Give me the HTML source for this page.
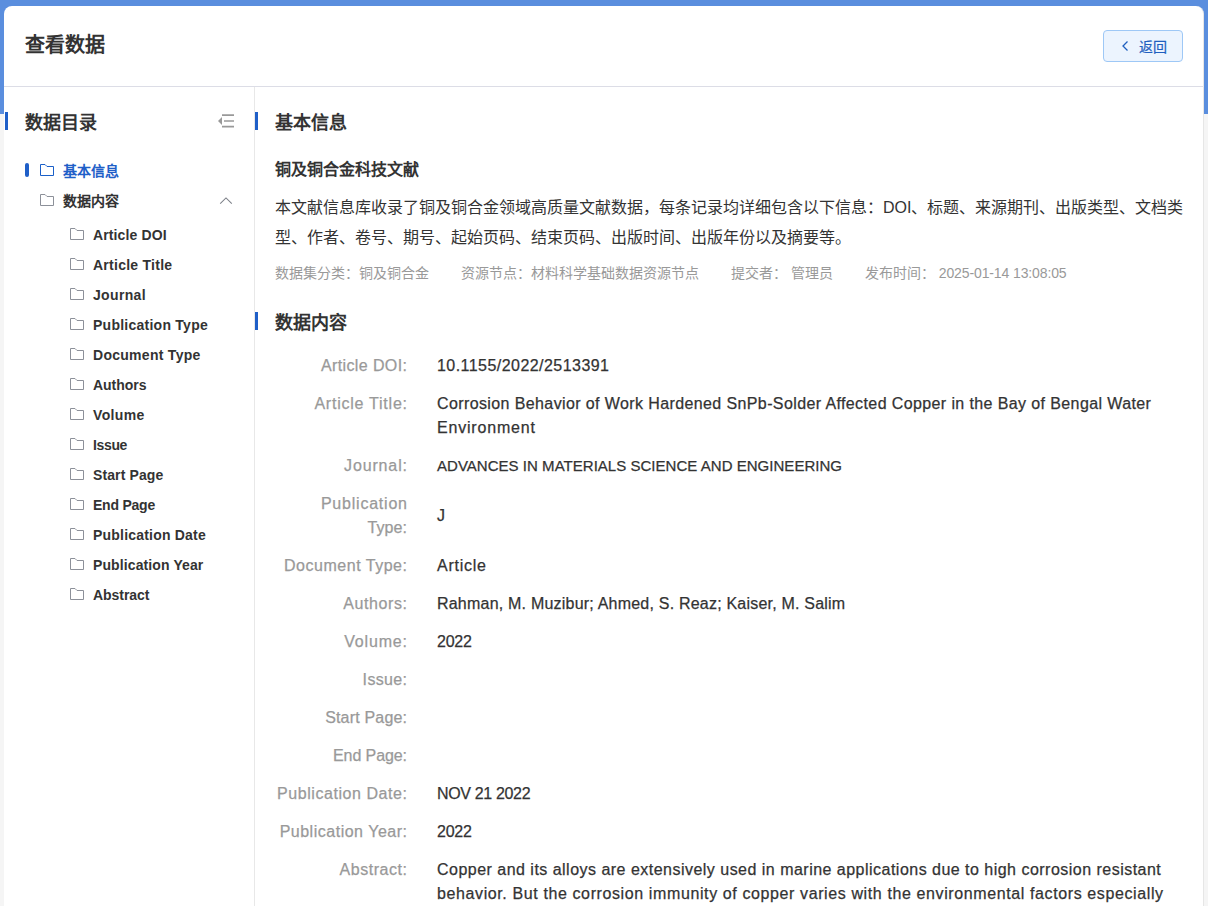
<!DOCTYPE html>
<html lang="zh-CN"><head><meta charset="utf-8">
<style>
*{box-sizing:border-box;margin:0;padding:0}
html,body{width:1208px;height:906px;overflow:hidden}
body{font-family:"Liberation Sans",sans-serif;background:#f5f5f5;position:relative;color:#333}
.bg{position:absolute;left:0;top:0;width:1208px;height:114px;background:#5a8ede}
.card{position:absolute;left:4px;top:6px;width:1200px;height:1000px;background:#fff;border-radius:8px;border-right:1px solid #e6e6e6}
.hline{position:absolute;left:4px;top:86px;width:1199px;height:1px;background:#dcdde6}
.vline{position:absolute;left:254px;top:87px;width:1px;height:820px;background:#e8e8e8}
h1{position:absolute;left:25px;top:33px;font-size:20px;font-weight:bold;color:#333;line-height:24px}
.back{position:absolute;left:1103px;top:30px;width:80px;height:32px;background:#ecf4fe;border:1px solid #9ec8f6;border-radius:4px;color:#1f5fbf;font-size:14px}
.back span{position:absolute;left:35px;top:7px;line-height:18px;-webkit-text-stroke:0.2px currentColor}
.back svg{position:absolute;left:18px;top:9px}
.bar{position:absolute;width:3px;background:#1f5fc8}
.h2{position:absolute;font-size:18px;font-weight:bold;line-height:24px;color:#333;white-space:nowrap}
.ic{position:absolute}
.pill{position:absolute;width:4px;height:14px;border-radius:2px;background:#1f5fc8}
.it{position:absolute;font-size:14px;font-weight:bold;line-height:20px;color:#333;white-space:nowrap}
.it.act{color:#1f5fc8}
.sub{position:absolute;left:275px;top:159px;font-size:16px;font-weight:bold;line-height:22px;white-space:nowrap}
.para{position:absolute;left:275px;top:193px;width:912px;font-size:16px;line-height:30px;color:#333}
.meta{position:absolute;left:275px;top:263px;font-size:14px;line-height:20px;color:#999;white-space:nowrap}
.meta span{margin-right:32px}
.rows{position:absolute;left:256px;top:347px;width:948px}
.row{position:relative;display:flex;font-size:16px;line-height:24px;padding:7px 0;-webkit-text-stroke:0.25px currentColor}
.row .l{width:151px;text-align:right;color:#999;flex:none}
.row .v{margin-left:30px;width:760px;color:#333;align-self:center;white-space:nowrap}
</style></head><body>
<div class="bg"></div>
<div class="card"></div>
<div class="hline"></div>
<div class="vline"></div>
<h1>查看数据</h1>
<div class="back"><svg width="8" height="12" viewBox="0 0 8 12"><path d="M5.5 1.5 L1 6 L5.5 10.5" fill="none" stroke="#1f5fbf" stroke-width="1.3"/></svg><span>返回</span></div>

<div class="bar" style="left:5px;top:112px;height:18px"></div>
<div class="h2" style="left:25px;top:111px">数据目录</div>
<svg class="ic" style="left:216px;top:112px" width="20" height="18" viewBox="0 0 20 18">
 <path d="M6 3.2H18M8 9H18M6 14.6H18" stroke="#999" stroke-width="1.7" fill="none"/>
 <path d="M6 5L2 9L6 13Z" fill="#999"/>
</svg>
<div class="pill" style="left:25px;top:163px"></div>
<svg class="ic" style="left:40px;top:164px" width="14" height="12" viewBox="0 0 14 12"><path d="M0.5 0.5H5L7 2.5H13.5V11.5H0.5Z" fill="none" stroke="#1a5fc8" stroke-width="1"/></svg>
<div class="it act" style="left:63px;top:161px">基本信息</div>
<svg class="ic" style="left:40px;top:194px" width="14" height="12" viewBox="0 0 14 12"><path d="M0.5 0.5H5L7 2.5H13.5V11.5H0.5Z" fill="none" stroke="#8c9099" stroke-width="1"/></svg>
<div class="it" style="left:63px;top:191px">数据内容</div>
<svg class="ic" style="left:219px;top:197px" width="14" height="8" viewBox="0 0 14 8"><path d="M1.2 6.6L7 0.9L12.8 6.6" fill="none" stroke="#7d8189" stroke-width="1.1"/></svg>
<svg class="ic" style="left:70px;top:228px" width="14" height="12" viewBox="0 0 14 12"><path d="M0.5 0.5H5L7 2.5H13.5V11.5H0.5Z" fill="none" stroke="#8c9099" stroke-width="1"/></svg>
<div class="it" style="left:93px;top:225px;letter-spacing:0.12px">Article DOI</div>
<svg class="ic" style="left:70px;top:258px" width="14" height="12" viewBox="0 0 14 12"><path d="M0.5 0.5H5L7 2.5H13.5V11.5H0.5Z" fill="none" stroke="#8c9099" stroke-width="1"/></svg>
<div class="it" style="left:93px;top:255px;letter-spacing:0.26px">Article Title</div>
<svg class="ic" style="left:70px;top:288px" width="14" height="12" viewBox="0 0 14 12"><path d="M0.5 0.5H5L7 2.5H13.5V11.5H0.5Z" fill="none" stroke="#8c9099" stroke-width="1"/></svg>
<div class="it" style="left:93px;top:285px;letter-spacing:0.33px">Journal</div>
<svg class="ic" style="left:70px;top:318px" width="14" height="12" viewBox="0 0 14 12"><path d="M0.5 0.5H5L7 2.5H13.5V11.5H0.5Z" fill="none" stroke="#8c9099" stroke-width="1"/></svg>
<div class="it" style="left:93px;top:315px;letter-spacing:0.25px">Publication Type</div>
<svg class="ic" style="left:70px;top:348px" width="14" height="12" viewBox="0 0 14 12"><path d="M0.5 0.5H5L7 2.5H13.5V11.5H0.5Z" fill="none" stroke="#8c9099" stroke-width="1"/></svg>
<div class="it" style="left:93px;top:345px;letter-spacing:0.28px">Document Type</div>
<svg class="ic" style="left:70px;top:378px" width="14" height="12" viewBox="0 0 14 12"><path d="M0.5 0.5H5L7 2.5H13.5V11.5H0.5Z" fill="none" stroke="#8c9099" stroke-width="1"/></svg>
<div class="it" style="left:93px;top:375px;letter-spacing:-0.03px">Authors</div>
<svg class="ic" style="left:70px;top:408px" width="14" height="12" viewBox="0 0 14 12"><path d="M0.5 0.5H5L7 2.5H13.5V11.5H0.5Z" fill="none" stroke="#8c9099" stroke-width="1"/></svg>
<div class="it" style="left:93px;top:405px;letter-spacing:0.36px">Volume</div>
<svg class="ic" style="left:70px;top:438px" width="14" height="12" viewBox="0 0 14 12"><path d="M0.5 0.5H5L7 2.5H13.5V11.5H0.5Z" fill="none" stroke="#8c9099" stroke-width="1"/></svg>
<div class="it" style="left:93px;top:435px;letter-spacing:-0.35px">Issue</div>
<svg class="ic" style="left:70px;top:468px" width="14" height="12" viewBox="0 0 14 12"><path d="M0.5 0.5H5L7 2.5H13.5V11.5H0.5Z" fill="none" stroke="#8c9099" stroke-width="1"/></svg>
<div class="it" style="left:93px;top:465px;letter-spacing:0.11px">Start Page</div>
<svg class="ic" style="left:70px;top:498px" width="14" height="12" viewBox="0 0 14 12"><path d="M0.5 0.5H5L7 2.5H13.5V11.5H0.5Z" fill="none" stroke="#8c9099" stroke-width="1"/></svg>
<div class="it" style="left:93px;top:495px;letter-spacing:-0.23px">End Page</div>
<svg class="ic" style="left:70px;top:528px" width="14" height="12" viewBox="0 0 14 12"><path d="M0.5 0.5H5L7 2.5H13.5V11.5H0.5Z" fill="none" stroke="#8c9099" stroke-width="1"/></svg>
<div class="it" style="left:93px;top:525px;letter-spacing:0.2px">Publication Date</div>
<svg class="ic" style="left:70px;top:558px" width="14" height="12" viewBox="0 0 14 12"><path d="M0.5 0.5H5L7 2.5H13.5V11.5H0.5Z" fill="none" stroke="#8c9099" stroke-width="1"/></svg>
<div class="it" style="left:93px;top:555px;letter-spacing:0.11px">Publication Year</div>
<svg class="ic" style="left:70px;top:588px" width="14" height="12" viewBox="0 0 14 12"><path d="M0.5 0.5H5L7 2.5H13.5V11.5H0.5Z" fill="none" stroke="#8c9099" stroke-width="1"/></svg>
<div class="it" style="left:93px;top:585px;letter-spacing:-0.04px">Abstract</div>

<div class="bar" style="left:255px;top:112px;height:18px"></div>
<div class="h2" style="left:275px;top:111px">基本信息</div>
<div class="sub">铜及铜合金科技文献</div>
<div class="para">本文献信息库收录了铜及铜合金领域高质量文献数据，每条记录均详细包含以下信息：DOI、标题、来源期刊、出版类型、文档类型、作者、卷号、期号、起始页码、结束页码、出版时间、出版年份以及摘要等。</div>
<div class="meta"><span>数据集分类：铜及铜合金</span><span>资源节点：材料科学基础数据资源节点</span><span>提交者： 管理员</span><span>发布时间： <i style="font-style:normal;letter-spacing:-0.12px">2025-01-14 13:08:05</i></span></div>
<div class="bar" style="left:255px;top:312px;height:18px"></div>
<div class="h2" style="left:275px;top:311px">数据内容</div>
<div class="rows">
<div class="row"><div class="l"><span style="letter-spacing:0.39px;margin-right:-0.39px">Article DOI:</span></div><div class="v"><span style="letter-spacing:0.45px;margin-right:-0.45px">10.1155/2022/2513391</span></div></div>
<div class="row"><div class="l"><span style="letter-spacing:0.76px;margin-right:-0.76px">Article Title:</span></div><div class="v"><span style="letter-spacing:0.39px;margin-right:-0.39px">Corrosion Behavior of Work Hardened SnPb-Solder Affected Copper in the Bay of Bengal Water</span><br><span style="letter-spacing:0.81px;margin-right:-0.81px">Environment</span></div></div>
<div class="row"><div class="l"><span style="letter-spacing:0.86px;margin-right:-0.86px">Journal:</span></div><div class="v"><span style="font-size:15px;letter-spacing:0.03px">ADVANCES IN MATERIALS SCIENCE AND ENGINEERING</span></div></div>
<div class="row"><div class="l"><span style="letter-spacing:0.78px;margin-right:-0.78px">Publication</span><br><span style="letter-spacing:0.1px;margin-right:-0.1px">Type:</span></div><div class="v"><span style="letter-spacing:-1.0px;margin-right:1.0px">J</span></div></div>
<div class="row"><div class="l"><span style="letter-spacing:0.52px;margin-right:-0.52px">Document Type:</span></div><div class="v"><span style="letter-spacing:0.73px;margin-right:-0.73px">Article</span></div></div>
<div class="row"><div class="l"><span style="letter-spacing:0.6px;margin-right:-0.6px">Authors:</span></div><div class="v"><span style="letter-spacing:0.21px;margin-right:-0.21px">Rahman, M. Muzibur; Ahmed, S. Reaz; Kaiser, M. Salim</span></div></div>
<div class="row"><div class="l"><span style="letter-spacing:0.82px;margin-right:-0.82px">Volume:</span></div><div class="v"><span style="letter-spacing:-0.27px;margin-right:0.27px">2022</span></div></div>
<div class="row"><div class="l"><span style="letter-spacing:0.34px;margin-right:-0.34px">Issue:</span></div><div class="v"></div></div>
<div class="row"><div class="l"><span style="letter-spacing:0.18px;margin-right:-0.18px">Start Page:</span></div><div class="v"></div></div>
<div class="row"><div class="l"><span style="letter-spacing:-0.09px;margin-right:0.09px">End Page:</span></div><div class="v"></div></div>
<div class="row"><div class="l"><span style="letter-spacing:0.56px;margin-right:-0.56px">Publication Date:</span></div><div class="v"><span style="letter-spacing:-0.34px;margin-right:0.34px">NOV 21 2022</span></div></div>
<div class="row"><div class="l"><span style="letter-spacing:0.51px;margin-right:-0.51px">Publication Year:</span></div><div class="v"><span style="letter-spacing:-0.27px;margin-right:0.27px">2022</span></div></div>
<div class="row"><div class="l"><span style="letter-spacing:0.53px;margin-right:-0.53px">Abstract:</span></div><div class="v"><span style="letter-spacing:0.48px;margin-right:-0.48px">Copper and its alloys are extensively used in marine applications due to high corrosion resistant</span><br><span style="letter-spacing:0.61px;margin-right:-0.61px">behavior. But the corrosion immunity of copper varies with the environmental factors especially</span><br>the presence of sulfide ions in seawater.</div></div>
</div>
</body></html>
